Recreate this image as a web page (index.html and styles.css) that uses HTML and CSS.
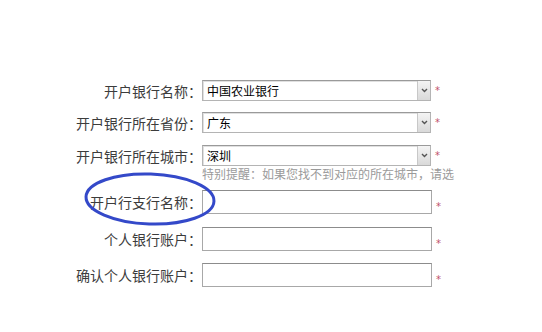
FILE: index.html
```html
<!DOCTYPE html>
<html lang="zh-CN">
<head>
<meta charset="utf-8">
<title>开户银行信息</title>
<link rel="stylesheet" href="styles.css">
</head>
<body>
<form class="form">
  <div class="row r1">
    <label class="lbl">开户银行名称：</label>
    <div class="select"><span class="val">中国农业银行</span><span class="btn"><svg width="7" height="5" viewBox="0 0 7 5"><path d="M1 1 L3.5 3.5 L6 1" fill="none" stroke="#555" stroke-width="1.4"/></svg></span></div>
    <span class="req sel">*</span>
  </div>
  <div class="row r2">
    <label class="lbl">开户银行所在省份：</label>
    <div class="select"><span class="val">广东</span><span class="btn"><svg width="7" height="5" viewBox="0 0 7 5"><path d="M1 1 L3.5 3.5 L6 1" fill="none" stroke="#555" stroke-width="1.4"/></svg></span></div>
    <span class="req sel">*</span>
  </div>
  <div class="row r3">
    <label class="lbl">开户银行所在城市：</label>
    <div class="select"><span class="val">深圳</span><span class="btn"><svg width="7" height="5" viewBox="0 0 7 5"><path d="M1 1 L3.5 3.5 L6 1" fill="none" stroke="#555" stroke-width="1.4"/></svg></span></div>
    <span class="req sel">*</span>
  </div>
  <div class="row hintrow">
    <span class="lbl"></span>
    <div class="hint">特别提醒：如果您找不到对应的所在城市，请选</div>
  </div>
  <div class="row r4">
    <label class="lbl">开户行支行名称：</label>
    <input class="inp" type="text">
    <span class="req">*</span>
  </div>
  <div class="row r5">
    <label class="lbl">个人银行账户：</label>
    <input class="inp" type="text">
    <span class="req">*</span>
  </div>
  <div class="row r6">
    <label class="lbl">确认个人银行账户：</label>
    <input class="inp" type="text">
    <span class="req">*</span>
  </div>
  <svg class="circle" width="140" height="62" viewBox="0 0 140 62"><ellipse cx="70" cy="31" rx="64" ry="25" transform="rotate(2 70 31)" fill="none" stroke="#3449c9" stroke-width="3"/></svg>
</form>
</body>
</html>
```
FILE: styles.css
```css
html, body {
  margin: 0;
  padding: 0;
  background: #fff;
  overflow: hidden;
}
body {
  font-family: "Noto Sans CJK SC", "Noto Sans", sans-serif;
  width: 542px;
  height: 332px;
}
.form {
  position: relative;
  padding-top: 80px;
  display: flex;
  flex-direction: column;
}
.row {
  display: flex;
  align-items: center;
}
.lbl {
  width: 202px;
  flex: none;
  text-align: right;
  font-size: 14px;
  color: #3c3c3c;
  white-space: nowrap;
}
.select {
  width: 229px;
  height: 21px;
  box-sizing: border-box;
  border: 1px solid #b4b4b4;
  border-top-color: #9a9a9a;
  box-shadow: inset 1px 1px 0 #e0e0e0;
  display: flex;
  align-items: center;
  justify-content: space-between;
  background: #fff;
  flex: none;
}
.val {
  font-size: 12px;
  color: #000;
  padding-left: 4px;
  line-height: 1;
}
.btn {
  width: 13px;
  height: 19px;
  box-sizing: border-box;
  border-left: 1px solid #c8c8c8;
  background: linear-gradient(#f4f4f4, #d9d9d9);
  display: flex;
  align-items: center;
  justify-content: center;
}
.req {
  color: #c0506a;
  font-size: 10px;
  margin-left: 4px;
  font-family: "DejaVu Sans", sans-serif;
}
.req:not(.sel) {
  margin-top: 8px;
}
.r2 { margin-top: 11px; }
.r3 { margin-top: 12px; }
.hintrow { margin-top: 1px; height: 14px; }
.hint {
  white-space: nowrap;
  font-size: 12px;
  line-height: 14px;
  color: #9a9a9a;
}
.inp {
  width: 230px;
  height: 24px;
  box-sizing: border-box;
  border: 1px solid #a8a8a8;
  border-top-color: #8c8c8c;
  margin: 0;
  padding: 0 4px;
  background: #fff;
  flex: none;
}
.r4 { margin-top: 9px; }
.r5 { margin-top: 13px; }
.r6 { margin-top: 12px; }
.circle {
  position: absolute;
  left: 80px;
  top: 168px;
}
```
